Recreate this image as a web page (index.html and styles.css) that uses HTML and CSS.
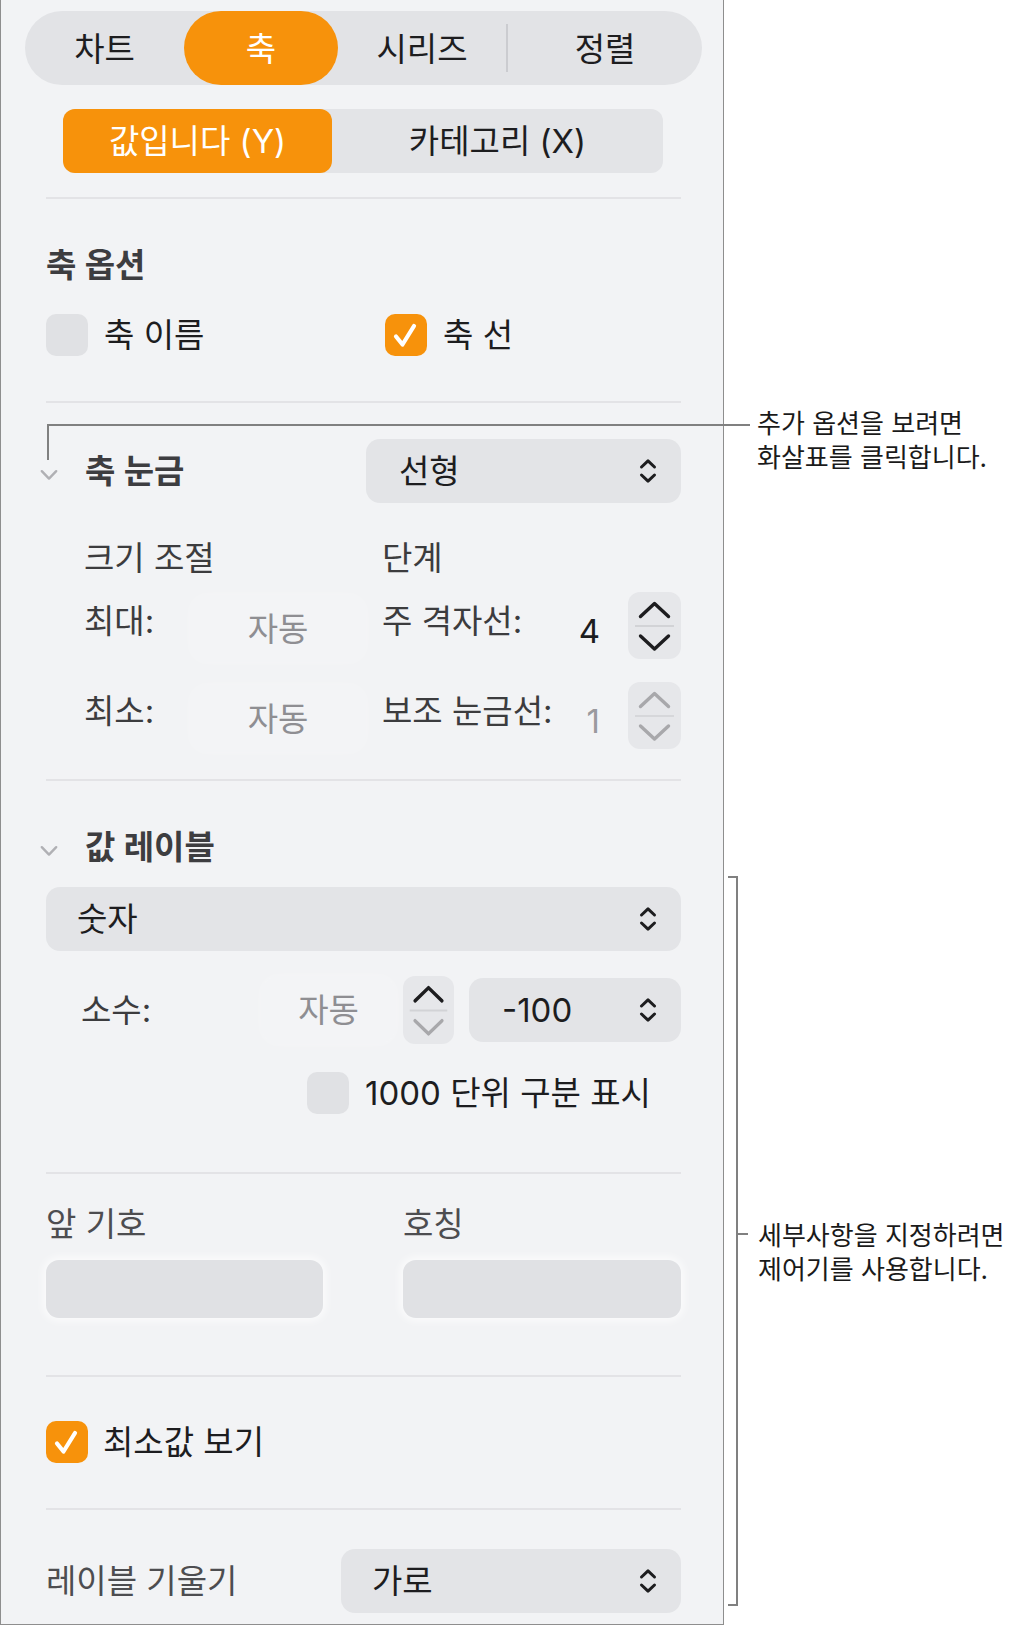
FILE: index.html
```html
<!doctype html>
<html lang="ko">
	<head>
		<meta charset="UTF-8">
		<title>축 포맷</title>
		<link rel="stylesheet" href="styles.css">
	</head>
	<body>
		<div class="page">
			<div class="panel">
				<div class="tabs">
					<div class="tab tab-chart">차트</div>
					<div class="tab tab-axis on">축</div>
					<div class="tab tab-series">시리즈</div>
					<div class="tab-sep"></div>
					<div class="tab tab-sort">정렬</div>
				</div>
				<div class="subtabs">
					<div class="subtab on">값입니다 (Y)</div>
					<div class="subtab">카테고리 (X)</div>
				</div>

				<div class="rule rule-top"></div>

				<div class="heading">축 옵션</div>
				<div class="checks">
					<div class="check"><span class="box"></span>축 이름</div>
					<div class="check"><span class="box on"><svg width="42" height="42" viewBox="0 0 42 42"><path d="M11 22.5 17.5 30.5 29 12" fill="none" stroke="#fff" stroke-width="4.2" stroke-linecap="round" stroke-linejoin="round"/></svg></span>축 선</div>
				</div>

				<div class="rule rule-options"></div>

				<div class="tickrow">
					<svg class="chev" width="18" height="12" viewBox="0 0 18 12"><path d="M1.8 2.2 9 9.6 16.2 2.2" fill="none" stroke="#b0b0b4" stroke-width="2.4" stroke-linecap="round" stroke-linejoin="round"/></svg>
					<div class="title">축 눈금</div>
					<div class="select select-scale">
						<span>선형</span>
						<svg class="updown" width="20" height="28" viewBox="0 0 20 28"><path d="M3.5 10 10 3.8 16.5 10M3.5 18 10 24.2 16.5 18" fill="none" stroke="#1d1d1f" stroke-width="3" stroke-linecap="round" stroke-linejoin="round"/></svg>
					</div>
				</div>

				<div class="scale">
					<div class="col-head">크기 조절</div>
					<div class="col-head">단계</div>

					<div class="field-row row-one">
						<span class="label">최대:</span>
						<span class="ghost">자동</span>
					</div>
					<div class="step-row row-one">
						<span class="label">주 격자선:</span>
						<span class="num">4</span>
						<div class="stepper">
							<svg width="53" height="67" viewBox="0 0 53 67"><path d="M12.5 24.5 26.5 11.5 40.5 24.5" fill="none" stroke="#1d1d1f" stroke-width="3.4" stroke-linecap="round" stroke-linejoin="round"/><path d="M7 34H46" stroke="#d2d3d6" stroke-width="2"/><path d="M12.5 44 26.5 57 40.5 44" fill="none" stroke="#1d1d1f" stroke-width="3.4" stroke-linecap="round" stroke-linejoin="round"/></svg>
						</div>
					</div>

					<div class="field-row row-two">
						<span class="label">최소:</span>
						<span class="ghost">자동</span>
					</div>
					<div class="step-row row-two">
						<span class="label">보조 눈금선:</span>
						<span class="num off">1</span>
						<div class="stepper">
							<svg width="53" height="67" viewBox="0 0 53 67"><path d="M12.5 24.5 26.5 11.5 40.5 24.5" fill="none" stroke="#a8a8ab" stroke-width="3.4" stroke-linecap="round" stroke-linejoin="round"/><path d="M7 34H46" stroke="#d6d7da" stroke-width="2"/><path d="M12.5 44 26.5 57 40.5 44" fill="none" stroke="#a8a8ab" stroke-width="3.4" stroke-linecap="round" stroke-linejoin="round"/></svg>
						</div>
					</div>
				</div>

				<div class="rule rule-scale"></div>

				<div class="labelrow">
					<svg class="chev" width="18" height="12" viewBox="0 0 18 12"><path d="M1.8 2.2 9 9.6 16.2 2.2" fill="none" stroke="#b0b0b4" stroke-width="2.4" stroke-linecap="round" stroke-linejoin="round"/></svg>
					<div class="title">값 레이블</div>
				</div>
				<div class="select select-format">
					<span>숫자</span>
					<svg class="updown" width="20" height="28" viewBox="0 0 20 28"><path d="M3.5 10 10 3.8 16.5 10M3.5 18 10 24.2 16.5 18" fill="none" stroke="#1d1d1f" stroke-width="3" stroke-linecap="round" stroke-linejoin="round"/></svg>
				</div>

				<div class="decimals">
					<span class="label">소수:</span>
					<span class="ghost">자동</span>
					<div class="stepper">
						<svg width="51" height="68" viewBox="0 0 53 67" preserveAspectRatio="none"><path d="M12.5 24.5 26.5 11.5 40.5 24.5" fill="none" stroke="#1d1d1f" stroke-width="3.4" stroke-linecap="round" stroke-linejoin="round"/><path d="M7 34H46" stroke="#d2d3d6" stroke-width="2"/><path d="M12.5 44 26.5 57 40.5 44" fill="none" stroke="#a8a8ab" stroke-width="3.4" stroke-linecap="round" stroke-linejoin="round"/></svg>
					</div>
					<div class="select select-neg">
						<span>-100</span>
						<svg class="updown" width="20" height="28" viewBox="0 0 20 28"><path d="M3.5 10 10 3.8 16.5 10M3.5 18 10 24.2 16.5 18" fill="none" stroke="#1d1d1f" stroke-width="3" stroke-linecap="round" stroke-linejoin="round"/></svg>
					</div>
				</div>

				<div class="check check-thousands"><span class="box"></span>1000 단위 구분 표시</div>

				<div class="rule rule-format"></div>

				<div class="affix">
					<div class="affix-label">앞 기호</div>
					<div class="affix-label">호칭</div>
					<div class="affix-input"></div>
					<div class="affix-input"></div>
				</div>

				<div class="rule rule-affix"></div>

				<div class="check check-min"><span class="box on"><svg width="42" height="42" viewBox="0 0 42 42"><path d="M11 22.5 17.5 30.5 29 12" fill="none" stroke="#fff" stroke-width="4.2" stroke-linecap="round" stroke-linejoin="round"/></svg></span>최소값 보기</div>

				<div class="rule rule-min"></div>

				<div class="anglerow">
					<span class="affix-label">레이블 기울기</span>
					<div class="select select-angle">
						<span>가로</span>
						<svg class="updown" width="20" height="28" viewBox="0 0 20 28"><path d="M3.5 10 10 3.8 16.5 10M3.5 18 10 24.2 16.5 18" fill="none" stroke="#1d1d1f" stroke-width="3" stroke-linecap="round" stroke-linejoin="round"/></svg>
					</div>
				</div>
			</div>

			<!-- callouts -->
			<div class="lead lead-h"></div>
			<div class="lead lead-v"></div>
			<div class="note note-arrow">추가 옵션을 보려면<br>화살표를 클릭합니다.</div>
			<div class="bracket"></div>
			<div class="lead bracket-tick"></div>
			<div class="note note-controls">세부사항을 지정하려면<br>제어기를 사용합니다.</div>
		</div>
	</body>
</html>
```

FILE: styles.css
```css
*
{
	box-sizing: border-box;
}
body
{
	margin: 0;
	background: #fff;
	font-family: Inter, "Noto Sans CJK KR", "Noto Sans", sans-serif;
	color: #1d1d1f;
}
.page
{
	position: relative;
	width: 1015px;
	height: 1626px;
}
.panel
{
	width: 724px;
	height: 1625px;
	background: #f2f3f5;
	border: 1px solid #8e8e8e;
	border-top: 0;
	padding: 11px 42px 0 45px;
	font-size: 33px;
	line-height: 40px;
}

/* top segmented control */
.tabs
{
	display: flex;
	height: 74px;
	margin: 0 -21px;
	background: #e2e3e6;
	border-radius: 37px;
}
.tab
{
	display: flex;
	align-items: center;
	justify-content: center;
	padding-top: 2px;
	border-radius: 37px;
}
.tab-chart { width: 159px; }
.tab-axis { width: 154px; }
.tab-series { width: 168px; }
.tab-sort { flex: 1; }
.tab.on
{
	background: #f7920b;
	color: #fff;
}
.tab-sep
{
	width: 2px;
	height: 48px;
	align-self: center;
	background: #cbccd0;
}

.subtabs
{
	display: flex;
	height: 64px;
	margin: 24px 18px 0 17px;
	background: #e3e4e7;
	border-radius: 12px;
}
.subtab
{
	flex: 1;
	display: flex;
	align-items: center;
	justify-content: center;
}
.subtab.on
{
	flex: 0 0 269px;
	background: #f7920b;
	color: #fff;
	border-radius: 12px;
}

.rule
{
	height: 2px;
	background: #e3e3e6;
}
.rule-top { margin-top: 24px; }
.rule-options { margin-top: 45px; }
.rule-scale { margin-top: 30px; }
.rule-format { margin-top: 58px; }
.rule-affix { margin-top: 57px; }
.rule-min { margin-top: 45px; }

.heading
{
	margin-top: 46px;
	font-weight: 600;
	color: #3d3d40;
}
.title
{
	font-weight: 600;
	color: #3d3d40;
}

.checks
{
	display: grid;
	grid-template-columns: 339px 1fr;
	margin-top: 29px;
}
.check
{
	display: flex;
	align-items: center;
	gap: 16px;
	height: 42px;
}
.box
{
	flex: none;
	display: flex;
	width: 42px;
	height: 42px;
	border-radius: 10px;
	background: #e0e1e4;
}
.box.on
{
	background: #f7920b;
}
.check-thousands
{
	margin-top: 28px;
	padding-left: 261px;
}
.check-min
{
	margin-top: 44px;
	gap: 15px;
}

.chev
{
	flex: none;
	margin: 8px 27px 0 -6px;
}
.tickrow
{
	display: flex;
	align-items: center;
	height: 64px;
	margin-top: 36px;
}
.labelrow
{
	display: flex;
	align-items: center;
	margin-top: 46px;
}

.select
{
	display: flex;
	align-items: center;
	justify-content: space-between;
	height: 64px;
	padding: 0 23px 0 33px;
	background: #e3e4e7;
	border-radius: 14px;
}
.select-scale
{
	width: 315px;
	margin-left: auto;
}
.select-format
{
	margin-top: 20px;
	padding-left: 31px;
}
.select-neg
{
	flex: 1;
	margin-left: 15px;
}
.select-angle
{
	width: 340px;
	margin-left: auto;
	padding-left: 31px;
}

/* scale & steps */
.scale
{
	display: grid;
	grid-template-columns: 298px 1fr;
	padding-left: 38px;
	margin-top: 35px;
}
.col-head
{
	color: #3c3c3e;
}
.label
{
	color: #3c3c3e;
}
.field-row,
.step-row
{
	display: flex;
	align-items: center;
	height: 67px;
}
.row-one { margin-top: 14px; }
.row-two { margin-top: 23px; }
.field-row .label
{
	width: 106px;
	margin-bottom: 10px;
}
.step-row .label
{
	margin-bottom: 10px;
}
.ghost
{
	display: flex;
	align-items: center;
	justify-content: center;
	width: 176px;
	height: 67px;
	margin-top: 6px;
	color: #8e8e92;
	background: rgba(255, 255, 255, 0.14);
	border-radius: 18px;
	box-shadow: 0 0 6px rgba(255, 255, 255, 0.35);
}
.num
{
	margin: 10px 28px 0 auto;
}
.num.off
{
	color: #9a9a9e;
}
.stepper
{
	flex: none;
	width: 53px;
	height: 67px;
	background: #e6e7ea;
	border-radius: 12px;
}
.stepper svg
{
	display: block;
}

.decimals
{
	display: flex;
	align-items: center;
	height: 68px;
	margin-top: 25px;
}
.decimals .label
{
	width: 215px;
	padding-left: 35px;
}
.decimals .ghost
{
	width: 135px;
	height: 68px;
	margin: 0 7px 0 0;
}
.decimals .stepper
{
	width: 51px;
	height: 68px;
}

.affix
{
	display: grid;
	grid-template-columns: 277px 278px;
	column-gap: 80px;
	margin-top: 30px;
}
.affix-label
{
	color: #4d4d50;
}
.affix-input
{
	height: 58px;
	margin-top: 16px;
	background: #e0e1e4;
	border-radius: 13px;
	box-shadow: 0 0 8px 3px rgba(255, 255, 255, 0.7);
}

.anglerow
{
	display: flex;
	align-items: center;
	margin-top: 39px;
}

/* callouts */
.lead
{
	position: absolute;
	background: #808080;
}
.lead-h
{
	left: 47px;
	top: 424px;
	width: 703px;
	height: 2px;
}
.lead-v
{
	left: 47px;
	top: 424px;
	width: 2px;
	height: 36px;
}
.bracket
{
	position: absolute;
	left: 728px;
	top: 876px;
	width: 10px;
	height: 730px;
	border: 2px solid #808080;
	border-left: 0;
}
.bracket-tick
{
	left: 738px;
	top: 1233px;
	width: 10px;
	height: 2px;
}
.note
{
	position: absolute;
	font-size: 26px;
	line-height: 34px;
	color: #1a1a1a;
	white-space: nowrap;
}
.note-arrow
{
	left: 757px;
	top: 407px;
}
.note-controls
{
	left: 758px;
	top: 1219px;
}
```
